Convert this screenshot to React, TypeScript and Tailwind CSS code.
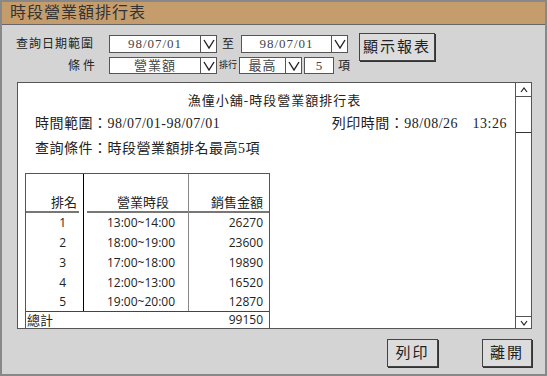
import React from "react";

const serif = "font-['Liberation_Serif','Noto_Sans_CJK_TC',serif]";
const sans = "font-['Open_Sans','Noto_Sans_CJK_TC',sans-serif]";

function Chevron({ up }: { up?: boolean }) {
  return (
    <svg width="12" height="10" viewBox="0 0 12 10">
      <polyline
        points={up ? "1,9 6,1 11,9" : "1,1 6,9 11,1"}
        fill="none"
        stroke="#222"
        strokeWidth="1.4"
      />
    </svg>
  );
}

function Combo({ w, h, value }: { w: string; h: string; value: string }) {
  return (
    <div className={`${w} ${h} flex border border-[#555] bg-white`}>
      <div className="flex-1 flex items-center justify-center text-[13px] text-[#444] tracking-[1px]">{value}</div>
      <div className="w-[16px] border-l border-[#555] flex items-center justify-center">
        <Chevron />
      </div>
    </div>
  );
}

function Btn({ label, w, className = "" }: { label: string; w: string; className?: string }) {
  return (
    <button
      className={`${w} h-[28px] bg-[#dcdcdc] border border-[#444] shadow-[1px_1px_0_#333] flex items-center justify-center text-[15px] text-[#222] tracking-[2px] ${className}`}
    >
      {label}
    </button>
  );
}

const rows = [
  { no: 1, time: "13:00~14:00", amt: "26270", h: "h-[20px]" },
  { no: 2, time: "18:00~19:00", amt: "23600", h: "h-[20px]" },
  { no: 3, time: "17:00~18:00", amt: "19890", h: "h-[20px]" },
  { no: 4, time: "12:00~13:00", amt: "16520", h: "h-[19px]" },
  { no: 5, time: "19:00~20:00", amt: "12870", h: "h-[19px]" },
];

export default function App() {
  return (
    <div className={`w-[547px] h-[376px] border-2 border-[#888] bg-[#d4d4d4] flex flex-col ${serif} text-[#222]`}>
      {/* 標題列 */}
      <div className="h-[23px] bg-[#c59c6c] border-b border-[#666] pl-[8px] flex items-center text-[16px] tracking-[1px] text-[#333]">
        時段營業額排行表
      </div>

      {/* 查詢條件 */}
      <div className="mt-[8px] flex">
        <div className="pt-[2px] flex flex-col gap-[4px]">
          <div className="flex h-[18px] items-center">
            <div className="w-[107px] pl-[14px] text-[12px] tracking-[1px]">查詢日期範圍</div>
            <Combo w="w-[108px]" h="h-[18px]" value="98/07/01" />
            <div className="ml-[5px] w-[19px] text-[12px]">至</div>
            <Combo w="w-[107px]" h="h-[18px]" value="98/07/01" />
          </div>
          <div className="flex h-[17px] items-center">
            <div className="w-[107px] pl-[66px] text-[12px] tracking-[3px]">條件</div>
            <Combo w="w-[108px]" h="h-[17px]" value="營業額" />
            <div className="ml-[2px] w-[20px] text-[9px]">排行</div>
            <Combo w="w-[63px]" h="h-[17px]" value="最高" />
            <div className="ml-[2px] w-[30px] h-[17px] border border-[#555] bg-white flex items-center justify-center text-[13px] text-[#444]">
              5
            </div>
            <div className="ml-[4px] text-[12px]">項</div>
          </div>
        </div>
        <Btn label="顯示報表" w="w-[76px]" className="ml-[9px]" />
      </div>

      {/* 報表 */}
      <div className="mt-[8px] ml-[15px] w-[515px] h-[247px] border border-[#555] bg-white flex">
        <div className="flex-1 overflow-hidden">
          <div className="pt-[9px] pl-[16px] h-[27px] flex items-center justify-center text-[13px] tracking-[1px]">
            漁僮小舖-時段營業額排行表
          </div>
          <div className="mt-[4px] h-[18px] pl-[17px] pr-[8px] flex items-center justify-between text-[14px] tracking-[0.5px]">
            <span>時間範圍：98/07/01-98/07/01</span>
            <span>列印時間：98/08/26　13:26</span>
          </div>
          <div className="mt-[7px] h-[18px] pl-[17px] flex items-center text-[14px] tracking-[0.5px]">
            查詢條件：時段營業額排名最高5項
          </div>

          <div className={`mt-[16px] ml-[7px] w-[245px] border-l border-t border-r border-[#555] ${sans} text-[12px] text-[#222]`}>
            <div className="flex h-[39px]">
              <div className="w-[58px] border-r border-black flex flex-col justify-end">
                <div className="h-[18px] pr-[6px] text-right text-[13px]">排名</div>
                <div className="h-[2px] mr-[4px] bg-[#777]" />
              </div>
              <div className="w-[105px] border-r border-[#888] flex flex-col justify-end">
                <div className="h-[18px] pl-[14px] text-center text-[13px]">營業時段</div>
                <div className="h-[2px] ml-[3px] bg-[#777]" />
              </div>
              <div className="flex-1 flex flex-col justify-end">
                <div className="h-[18px] pr-[6px] text-right text-[13px]">銷售金額</div>
                <div className="h-[2px] bg-[#777]" />
              </div>
            </div>
            {rows.map((r) => (
              <div key={r.no} className={`flex ${r.h} items-center`}>
                <div className="w-[58px] h-full border-r border-black flex items-center justify-end pr-[17px]">{r.no}</div>
                <div className="w-[105px] h-full border-r border-[#888] flex items-center justify-center pl-[10px]">{r.time}</div>
                <div className="flex-1 h-full flex items-center justify-end pr-[6px]">{r.amt}</div>
              </div>
            ))}
            <div className="flex h-[20px] items-start leading-[16px] border-t border-[#444] justify-between pl-[1px] pr-[6px]">
              <span className="text-[13px]">總計</span>
              <span>99150</span>
            </div>
          </div>
        </div>

        {/* 捲軸 */}
        <div className="w-[16px] border-l border-[#555] flex flex-col">
          <div className="h-[14px] border-b border-[#555] flex items-center justify-center">
            <svg width="8" height="6" viewBox="0 0 8 6">
              <polyline points="1,5 4,1 7,5" fill="none" stroke="#222" strokeWidth="1.2" />
            </svg>
          </div>
          <div className="h-[36px] border-b border-[#333]" />
          <div className="flex-1" />
          <div className="h-[12px] border-t border-[#555] flex items-center justify-center">
            <svg width="8" height="6" viewBox="0 0 8 6">
              <polyline points="1,1 4,5 7,1" fill="none" stroke="#222" strokeWidth="1.2" />
            </svg>
          </div>
        </div>
      </div>

      {/* 按鈕 */}
      <div className="mt-[10px] pr-[13px] flex justify-end">
        <Btn label="列印" w="w-[51px]" className="mr-[44px]" />
        <Btn label="離開" w="w-[50px]" />
      </div>
    </div>
  );
}
